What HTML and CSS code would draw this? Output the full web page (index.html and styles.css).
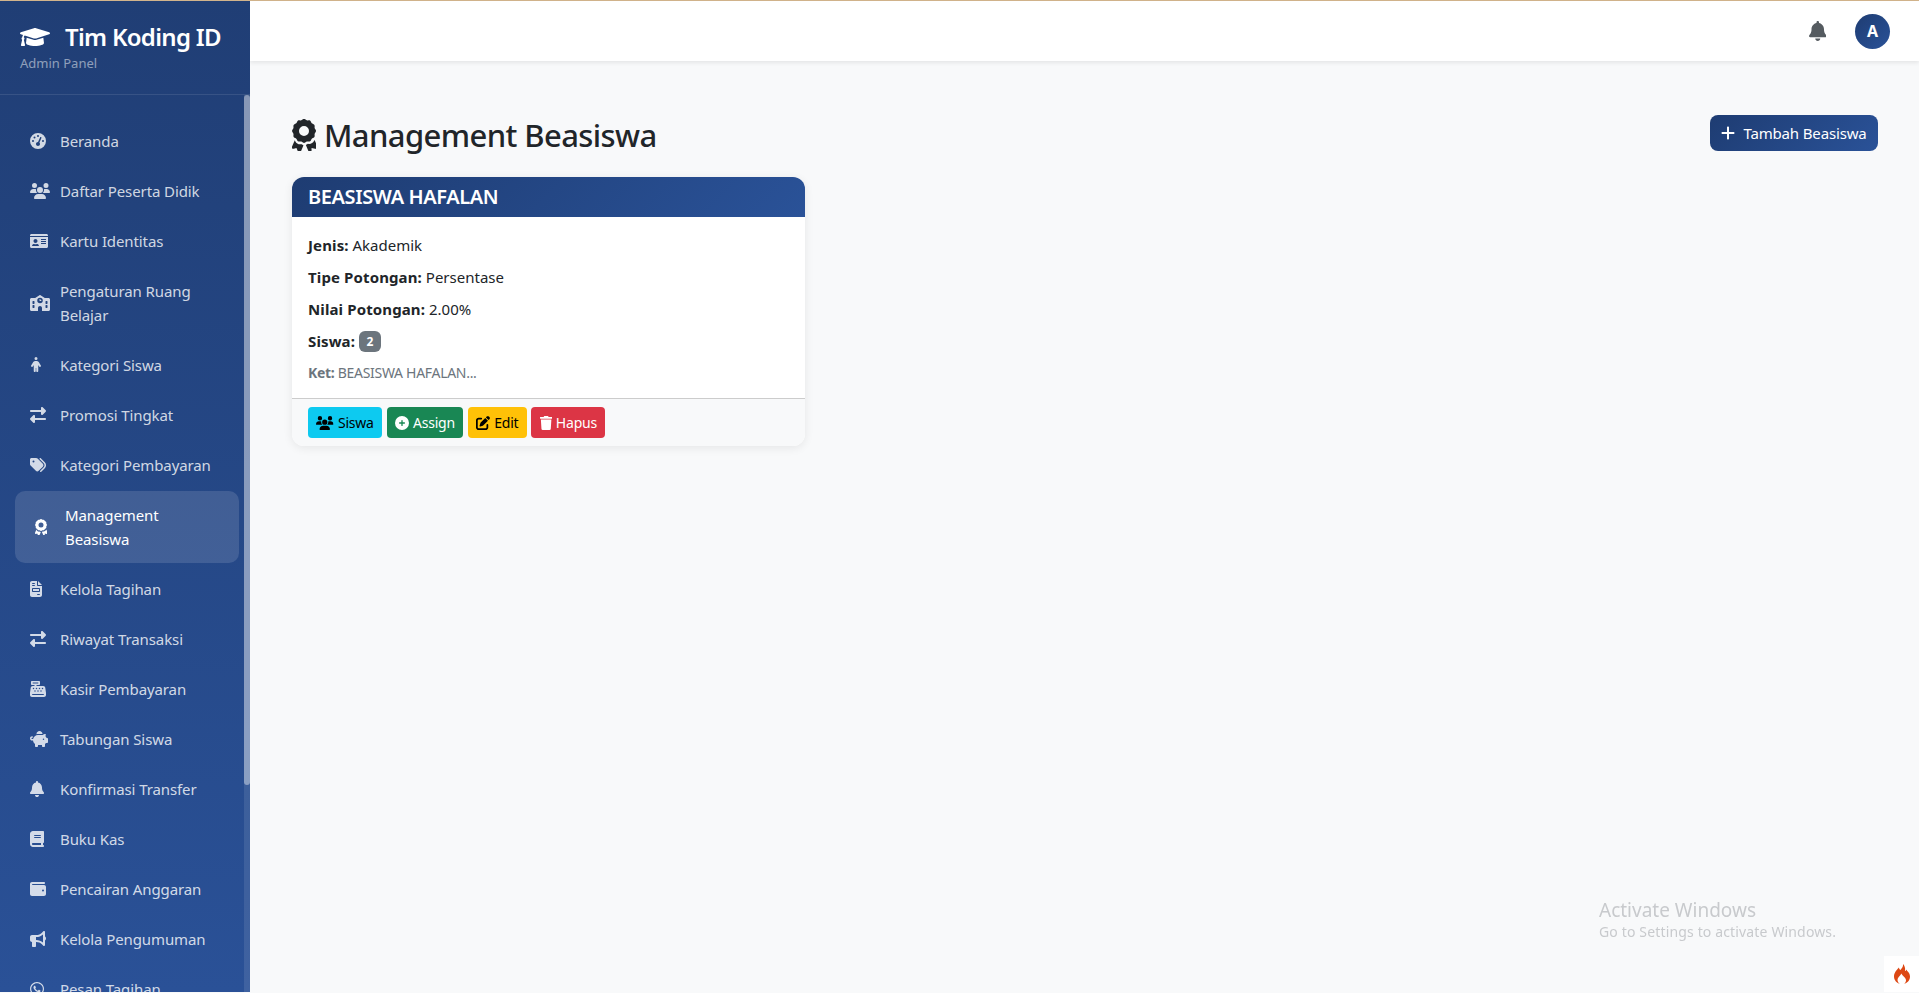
FILE: index.html
```html
<!DOCTYPE html>
<html lang="id">
<head>
<meta charset="utf-8">
<title>Management Beasiswa</title>
<link rel="stylesheet" href="styles.css">
</head>
<body>
<svg class="defs" aria-hidden="true">
  <symbol id="i-exchange" viewBox="0 0 512 512"><path d="M32 96l320 0V32c0-12.900 7.800-24.600 19.800-29.600s25.700-2.200 34.900 6.900l96 96c6 6 9.400 14.100 9.400 22.600s-3.400 16.600-9.400 22.600l-96 96c-9.200 9.200-22.900 11.900-34.900 6.900s-19.800-16.600-19.800-29.600V160L32 160c-17.700 0-32-14.300-32-32s14.300-32 32-32zM480 352c17.700 0 32 14.300 32 32s-14.300 32-32 32H160v64c0 12.900-7.800 24.600-19.800 29.600s-25.700 2.200-34.900-6.900l-96-96c-6-6-9.400-14.100-9.400-22.600s3.400-16.600 9.400-22.600l96-96c9.200-9.200 22.900-11.900 34.900-6.900s19.800 16.700 19.800 29.600l0 64H480z"/></symbol>
  <symbol id="i-users" viewBox="0 0 640 512"><path d="M144 0a80 80 0 1 1 0 160A80 80 0 1 1 144 0zM512 0a80 80 0 1 1 0 160A80 80 0 1 1 512 0zM0 298.700C0 239.800 47.800 192 106.700 192h42.700c15.900 0 31 3.500 44.600 9.700c-1.300 7.200-1.900 14.700-1.900 22.300c0 38.200 16.800 72.500 43.300 96c-.2 0-.4 0-.7 0H21.300C9.600 320 0 310.400 0 298.700zM405.300 320c-.2 0-.4 0-.7 0c26.600-23.500 43.300-57.800 43.300-96c0-7.600-.7-15-1.900-22.300c13.600-6.300 28.700-9.700 44.600-9.700h42.700C592.200 192 640 239.800 640 298.700c0 11.800-9.600 21.300-21.300 21.300H405.300zM224 224a96 96 0 1 1 192 0 96 96 0 1 1 -192 0zM128 485.300C128 411.700 187.700 352 261.300 352H378.700C452.300 352 512 411.700 512 485.300c0 14.700-11.900 26.700-26.700 26.700H154.700c-14.700 0-26.700-11.900-26.700-26.700z"/></symbol>
  <symbol id="i-award" viewBox="0 0 384 512"><path d="M173.800 5.500c11.100-7.300 25.400-7.300 36.500 0L228 17.200c6 3.900 13 5.800 20.100 5.400l21.100-1.300c13.200-.8 25.600 6.400 31.500 18.200l9.500 18.900c3.200 6.400 8.400 11.500 14.700 14.700L344.500 82.500c11.800 5.900 19 18.300 18.200 31.500l-1.300 21.100c-.4 7.100 1.500 14.200 5.400 20.100l11.700 17.700c7.300 11.100 7.300 25.400 0 36.500L366.800 227.500c-3.900 6-5.800 13-5.400 20.100l1.300 21.100c.8 13.200-6.400 25.600-18.200 31.500l-18.900 9.500c-6.400 3.200-11.500 8.400-14.700 14.700L301.400 343.300c-5.900 11.800-18.300 19-31.500 18.200l-21.100-1.300c-7.100-.4-14.200 1.500-20.100 5.400l-17.700 11.700c-11.100 7.300-25.400 7.300-36.500 0L157 365.600c-6-3.900-13-5.800-20.100-5.400l-21.100 1.300c-13.200 .8-25.600-6.400-31.500-18.200l-9.500-18.900c-3.200-6.400-8.400-11.500-14.700-14.700L40.800 300.200c-11.800-5.900-19-18.300-18.200-31.500l1.300-21.100c.4-7.100-1.500-14.200-5.400-20.100L6.800 209.800c-7.300-11.100-7.300-25.400 0-36.500L18.500 155.600c3.900-6 5.800-13 5.400-20.100L22.600 114.400c-.8-13.200 6.400-25.600 18.200-31.500l18.900-9.500c6.400-3.200 11.500-8.400 14.700-14.700L83.900 39.800c5.900-11.800 18.300-19 31.500-18.200l21.100 1.300c7.100 .4 14.200-1.500 20.100-5.400L173.800 5.500zM272 192a80 80 0 1 0 -160 0 80 80 0 1 0 160 0zM1.300 441.800L44.400 339.300c.2 .1 .3 .2 .4 .4l9.500 18.900c14.900 29.800 46.100 47.900 79.300 45.800l21.100-1.300c.2 0 .5 0 .7 .2l17.700 11.700c3.500 2.300 7.100 4.300 10.900 6l-38.700 92c-4.300 10.300-14.100 17.100-25.200 17.700s-21.600-5.200-26.900-15L71 465.500l-42.100 10.800c-11 2.800-22.500-1-29.700-9.800s-8.900-20.800-4.500-31.200zM312.600 510.500c-5.300 9.800-15.800 15.700-26.900 15s-20.900-7.500-25.200-17.700l-38.700-92c3.800-1.700 7.400-3.700 10.900-6l17.700-11.700c.2-.1 .4-.2 .7-.2l21.100 1.300c33.200 2 64.400-16 79.300-45.800l9.500-18.900c.1-.2 .2-.3 .4-.4l43.100 102.500c4.400 10.400 2.600 22.400-4.500 31.200s-18.700 12.600-29.700 9.800L313 465.500l-.4 45z"/></symbol>
  <symbol id="i-bell" viewBox="0 0 448 512"><path d="M224 0c-17.700 0-32 14.300-32 32V51.200C119 66 64 130.600 64 208v18.800c0 47-17.300 92.400-48.500 127.600l-7.400 8.300c-8.400 9.400-10.400 22.900-5.300 34.400S19.400 416 32 416H416c12.600 0 24-7.400 29.200-18.900s3.100-25-5.300-34.400l-7.400-8.300C401.300 319.200 384 273.900 384 226.800V208c0-77.400-55-142-128-156.800V32c0-17.700-14.300-32-32-32zm45.300 493.300c12-12 18.700-28.300 18.700-45.300H224 160c0 17 6.700 33.300 18.700 45.300s28.300 18.700 45.300 18.700s33.300-6.700 45.300-18.700z"/></symbol>
</svg>

<div class="layout">
  <aside class="sidebar">
    <div class="brand">
      <div class="brand-title">
        <svg class="brand-icon" viewBox="0 0 640 512"><path d="M622.34 153.2L343.4 67.5c-15.2-4.67-31.6-4.67-46.79 0L17.66 153.2c-23.54 7.23-23.54 38.36 0 45.59l48.63 14.94c-10.67 13.19-17.23 29.28-17.88 46.9C38.78 266.15 32 276.11 32 288c0 10.78 5.68 19.85 13.86 25.65L20.33 428.53C18.11 438.52 25.71 448 35.94 448h56.11c10.24 0 17.84-9.48 15.62-19.47L82.14 313.65C90.32 307.85 96 298.78 96 288c0-11.57-6.47-21.25-15.66-26.87.76-15.02 8.44-28.3 20.69-36.72L296.6 285.5c9.06 2.78 26.44 6.25 46.79 0l278.95-85.7c23.55-7.24 23.55-38.36 0-45.6zM352.79 315.09c-28.53 8.76-52.84 3.92-65.59 0l-145.02-44.55L128 384c0 35.35 85.96 64 192 64s192-28.65 192-64l-14.18-113.47-145.03 44.56z"/></svg>
        <span>Tim Koding ID</span>
      </div>
      <div class="brand-sub">Admin Panel</div>
    </div>
    <nav class="nav">
      <a class="nav-item"><span class="nav-ico"><svg class="ico" viewBox="0 0 512 512"><path d="M0 256a256 256 0 1 1 512 0A256 256 0 1 1 0 256zM288 96a32 32 0 1 0 -64 0 32 32 0 1 0 64 0zM256 416c35.3 0 64-28.7 64-64c0-17.4-6.9-33.1-18.1-44.6L366 161.7c5.3-12.1-.2-26.3-12.3-31.6s-26.3 .2-31.6 12.3L257.9 288c-.6 0-1.3 0-1.9 0c-35.3 0-64 28.7-64 64s28.7 64 64 64zM176 144a32 32 0 1 0 -64 0 32 32 0 1 0 64 0zM96 288a32 32 0 1 0 0-64 32 32 0 1 0 0 64zm352-32a32 32 0 1 0 -64 0 32 32 0 1 0 64 0z"/></svg></span><span>Beranda</span></a>
      <a class="nav-item"><span class="nav-ico"><svg class="ico w125"><use href="#i-users"/></svg></span><span>Daftar Peserta Didik</span></a>
      <a class="nav-item"><span class="nav-ico"><svg class="ico w1125" viewBox="0 0 576 512"><path d="M528 32H48C21.5 32 0 53.5 0 80v16h576V80c0-26.5-21.5-48-48-48zM0 432c0 26.5 21.5 48 48 48h480c26.5 0 48-21.5 48-48V128H0v304zm352-232c0-4.4 3.6-8 8-8h144c4.4 0 8 3.6 8 8v16c0 4.4-3.6 8-8 8H360c-4.4 0-8-3.6-8-8v-16zm0 64c0-4.4 3.6-8 8-8h144c4.4 0 8 3.6 8 8v16c0 4.4-3.6 8-8 8H360c-4.4 0-8-3.6-8-8v-16zm0 64c0-4.4 3.6-8 8-8h144c4.4 0 8 3.6 8 8v16c0 4.4-3.6 8-8 8H360c-4.4 0-8-3.6-8-8v-16zM176 192c35.3 0 64 28.7 64 64s-28.7 64-64 64-64-28.7-64-64 28.7-64 64-64zM67.1 396.2C75.5 370.5 99.6 352 128 352h8.2c12.3 5.1 25.7 8 39.8 8s27.6-2.9 39.8-8h8.2c28.4 0 52.5 18.5 60.9 44.2 3.2 9.9-5.2 19.8-15.6 19.8H82.7c-10.4 0-18.8-10-15.6-19.8z"/></svg></span><span>Kartu Identitas</span></a>
      <a class="nav-item"><span class="nav-ico"><svg class="ico w125" viewBox="0 0 640 512"><path d="M337.8 5.4C327-1.8 313-1.8 302.2 5.4L166.3 96H48C21.5 96 0 117.5 0 144V464c0 26.5 21.5 48 48 48H256V416c0-35.3 28.7-64 64-64s64 28.7 64 64v96H592c26.5 0 48-21.5 48-48V144c0-26.5-21.5-48-48-48H473.7L337.8 5.4zM96 192h32c8.8 0 16 7.2 16 16v64c0 8.8-7.2 16-16 16H96c-8.8 0-16-7.2-16-16V208c0-8.8 7.2-16 16-16zm400 16c0-8.8 7.2-16 16-16h32c8.8 0 16 7.2 16 16v64c0 8.8-7.2 16-16 16H512c-8.8 0-16-7.2-16-16V208zM96 320h32c8.8 0 16 7.2 16 16v64c0 8.8-7.2 16-16 16H96c-8.8 0-16-7.2-16-16V336c0-8.8 7.2-16 16-16zm400 16c0-8.8 7.2-16 16-16h32c8.8 0 16 7.2 16 16v64c0 8.8-7.2 16-16 16H512c-8.8 0-16-7.2-16-16V336zM232 176a88 88 0 1 1 176 0 88 88 0 1 1 -176 0zm88-48c-8.8 0-16 7.2-16 16v32c0 8.8 7.2 16 16 16h32c8.8 0 16-7.2 16-16s-7.2-16-16-16H336V144c0-8.8-7.2-16-16-16z"/></svg></span><span>Pengaturan Ruang Belajar</span></a>
      <a class="nav-item"><span class="nav-ico"><svg class="ico w075" viewBox="0 0 384 512"><path d="M192 96a48 48 0 1 0 0-96 48 48 0 1 0 0 96zm-8 352V352h16v96c0 17.7 14.3 32 32 32s32-14.3 32-32V256.9l28.6 47.5c9.1 15.1 28.8 20 43.9 10.9s20-28.8 10.9-43.9l-58.3-97c-17.4-28.9-48.6-46.6-82.3-46.6H177.1c-33.7 0-64.9 17.7-82.3 46.6l-58.3 97c-9.1 15.1-4.2 34.8 10.9 43.9s34.8 4.2 43.9-10.9L120 256.9V448c0 17.7 14.3 32 32 32s32-14.3 32-32z"/></svg></span><span>Kategori Siswa</span></a>
      <a class="nav-item"><span class="nav-ico"><svg class="ico"><use href="#i-exchange"/></svg></span><span>Promosi Tingkat</span></a>
      <a class="nav-item"><span class="nav-ico"><svg class="ico" viewBox="0 0 512 512"><path d="M345 39.100L472.800 168.400c52.400 53 52.400 138.200 0 191.200L360.800 472.900c-9.300 9.400-24.500 9.500-33.900 .2s-9.500-24.500-.2-33.900L438.600 325.900c33.900-34.300 33.900-89.400 0-123.700L310.900 72.900c-9.300-9.400-9.200-24.600 .2-33.900s24.600-9.200 33.900 .2zM0 229.500V80C0 53.500 21.500 32 48 32H197.500c17 0 33.300 6.700 45.300 18.700l168 168c25 25 25 65.500 0 90.500L277.300 442.700c-25 25-65.500 25-90.500 0l-168-168C6.700 262.700 0 246.500 0 229.500zM144 144a32 32 0 1 0 -64 0 32 32 0 1 0 64 0z"/></svg></span><span>Kategori Pembayaran</span></a>
      <a class="nav-item active"><span class="nav-ico"><svg class="ico w075"><use href="#i-award"/></svg></span><span>Management Beasiswa</span></a>
      <a class="nav-item"><span class="nav-ico"><svg class="ico w075" viewBox="0 0 384 512"><path d="M64 0C28.700 0 0 28.700 0 64V448c0 35.300 28.700 64 64 64H320c35.300 0 64-28.700 64-64V160H256c-17.700 0-32-14.300-32-32V0H64zM256 0V128H384L256 0zM80 64h64c8.800 0 16 7.200 16 16s-7.200 16-16 16H80c-8.800 0-16-7.200-16-16s7.200-16 16-16zm0 64h64c8.800 0 16 7.200 16 16s-7.200 16-16 16H80c-8.800 0-16-7.200-16-16s7.200-16 16-16zm16 96H288c17.700 0 32 14.300 32 32v64c0 17.700-14.300 32-32 32H96c-17.700 0-32-14.300-32-32V256c0-17.700 14.300-32 32-32zm0 32v64H288V256H96zM240 416h64c8.800 0 16 7.200 16 16s-7.200 16-16 16H240c-8.800 0-16-7.200-16-16s7.200-16 16-16z"/></svg></span><span>Kelola Tagihan</span></a>
      <a class="nav-item"><span class="nav-ico"><svg class="ico"><use href="#i-exchange"/></svg></span><span>Riwayat Transaksi</span></a>
      <a class="nav-item"><span class="nav-ico"><svg class="ico" viewBox="0 0 512 512"><path d="M64 0C46.300 0 32 14.300 32 32V96c0 17.700 14.300 32 32 32h80v32H87c-31.600 0-58.500 23.100-63.300 54.400L1.100 364.100C.4 368.800 0 373.600 0 378.400V448c0 35.300 28.700 64 64 64H448c35.300 0 64-28.700 64-64V378.400c0-4.800-.4-9.600-1.100-14.400L488.200 214.400C483.500 183.100 456.600 160 425 160H208V128h80c17.700 0 32-14.300 32-32V32c0-17.700-14.300-32-32-32H64zM96 48H256c8.800 0 16 7.200 16 16s-7.200 16-16 16H96c-8.800 0-16-7.200-16-16s7.200-16 16-16zM64 432c0-8.800 7.200-16 16-16H432c8.800 0 16 7.200 16 16s-7.200 16-16 16H80c-8.800 0-16-7.200-16-16zm48-168a24 24 0 1 1 0-48 24 24 0 1 1 0 48zm120-24a24 24 0 1 1 -48 0 24 24 0 1 1 48 0zM160 344a24 24 0 1 1 0-48 24 24 0 1 1 0 48zM328 240a24 24 0 1 1 -48 0 24 24 0 1 1 48 0zM256 344a24 24 0 1 1 0-48 24 24 0 1 1 0 48zM424 240a24 24 0 1 1 -48 0 24 24 0 1 1 48 0zM352 344a24 24 0 1 1 0-48 24 24 0 1 1 0 48z"/></svg></span><span>Kasir Pembayaran</span></a>
      <a class="nav-item"><span class="nav-ico"><svg class="ico w1125" viewBox="0 0 576 512"><path d="M400 96l0 .7c-5.300-.4-10.600-.7-16-.7H256c-16.500 0-32.500 2.100-47.800 6c-.1-2-.2-4-.2-6c0-53 43-96 96-96s96 43 96 96zm-16 32c3.500 0 7 .1 10.400 .3c4.200 .3 8.400 .7 12.600 1.300C424.600 109.100 450.800 96 480 96h11.500c10.400 0 18 9.800 15.500 19.900l-13.800 55.200c15.800 14.800 28.700 32.800 37.500 52.900H544c17.700 0 32 14.300 32 32v96c0 17.700-14.300 32-32 32H512c-9.100 12.100-19.900 22.900-32 32v64c0 17.700-14.300 32-32 32H416c-17.700 0-32-14.300-32-32V448H256v32c0 17.700-14.300 32-32 32H192c-17.700 0-32-14.300-32-32V416c-34.900-26.200-58.700-66.300-63.200-112H68c-37.600 0-68-30.400-68-68s30.400-68 68-68h4c13.300 0 24 10.700 24 24s-10.700 24-24 24H68c-11 0-20 9-20 20s9 20 20 20H99.200c14.800-73 79.400-128 156.800-128H384zm48 160a24 24 0 1 0 0-48 24 24 0 1 0 0 48z"/></svg></span><span>Tabungan Siswa</span></a>
      <a class="nav-item"><span class="nav-ico"><svg class="ico w0875"><use href="#i-bell"/></svg></span><span>Konfirmasi Transfer</span></a>
      <a class="nav-item"><span class="nav-ico"><svg class="ico w0875" viewBox="0 0 448 512"><path d="M96 0C43 0 0 43 0 96V416c0 53 43 96 96 96H384h32c17.700 0 32-14.300 32-32s-14.300-32-32-32V384c17.700 0 32-14.300 32-32V32c0-17.700-14.300-32-32-32H384 96zm0 384H352v64H96c-17.700 0-32-14.300-32-32s14.300-32 32-32zm32-240c0-8.800 7.200-16 16-16H336c8.800 0 16 7.200 16 16s-7.200 16-16 16H144c-8.800 0-16-7.200-16-16zm16 48H336c8.800 0 16 7.200 16 16s-7.200 16-16 16H144c-8.800 0-16-7.200-16-16s7.200-16 16-16z"/></svg></span><span>Buku Kas</span></a>
      <a class="nav-item"><span class="nav-ico"><svg class="ico" viewBox="0 0 512 512"><path d="M64 32C28.700 32 0 60.700 0 96V416c0 35.300 28.700 64 64 64H448c35.300 0 64-28.700 64-64V192c0-35.300-28.700-64-64-64H80c-8.800 0-16-7.200-16-16s7.200-16 16-16H448c17.700 0 32-14.300 32-32s-14.300-32-32-32H64zM416 272a32 32 0 1 1 0 64 32 32 0 1 1 0-64z"/></svg></span><span>Pencairan Anggaran</span></a>
      <a class="nav-item"><span class="nav-ico"><svg class="ico" viewBox="0 0 512 512"><path d="M480 32c0-12.900-7.800-24.600-19.800-29.600s-25.700-2.200-34.900 6.900L381.700 53c-48 48-113.100 75-181 75H192 160 64c-35.300 0-64 28.700-64 64v96c0 35.300 28.700 64 64 64l0 128c0 17.700 14.300 32 32 32h64c17.700 0 32-14.300 32-32V352l8.700 0c67.900 0 133 27 181 75l43.600 43.600c9.200 9.200 22.900 11.900 34.900 6.900s19.800-16.600 19.800-29.600V300.400c18.600-8.800 32-32.500 32-60.400s-13.400-51.600-32-60.400V32zm-64 76.700V240 371.300C357.200 317.800 280.500 288 200.700 288H192V192h8.700c79.800 0 156.500-29.800 215.300-83.300z"/></svg></span><span>Kelola Pengumuman</span></a>
      <a class="nav-item"><span class="nav-ico"><svg class="ico w0875" viewBox="0 0 448 512"><path d="M380.900 97.100C339 55.100 283.200 32 223.900 32c-122.400 0-222 99.600-222 222 0 39.100 10.200 77.300 29.600 111L0 480l117.700-30.900c32.400 17.700 68.900 27 106.100 27h.1c122.300 0 224.100-99.600 224.100-222 0-59.300-25.200-115-67.100-157zm-157 341.600c-33.200 0-65.700-8.900-94-25.700l-6.700-4-69.800 18.300L72 359.200l-4.400-7c-18.500-29.400-28.200-63.300-28.200-98.200 0-101.700 82.800-184.500 184.600-184.500 49.300 0 95.600 19.200 130.400 54.100 34.800 34.900 56.200 81.200 56.100 130.500 0 101.800-84.900 184.600-186.600 184.600zm101.200-138.200c-5.500-2.800-32.800-16.200-37.900-18-5.100-1.900-8.800-2.800-12.500 2.800-3.700 5.600-14.300 18-17.600 21.800-3.200 3.700-6.500 4.200-12 1.400-32.600-16.300-54-29.100-75.500-66-5.700-9.800 5.700-9.100 16.300-30.300 1.800-3.700 .9-6.900-.5-9.700-1.400-2.800-12.500-30.100-17.100-41.200-4.500-10.800-9.100-9.300-12.500-9.500-3.200-.2-6.900-.2-10.600-.2-3.700 0-9.700 1.400-14.800 6.900-5.100 5.600-19.400 19-19.400 46.300 0 27.300 19.900 53.700 22.600 57.400 2.800 3.700 39.100 59.700 94.800 83.800 35.200 15.200 49 16.500 66.600 13.900 10.700-1.600 32.800-13.400 37.400-26.400 4.600-13 4.600-24.100 3.200-26.400-1.300-2.500-5-3.900-10.500-6.600z"/></svg></span><span>Pesan Tagihan</span></a>
    </nav>
    <div class="scroll-track"><div class="scroll-thumb"></div></div>
  </aside>

  <div class="main">
    <header class="topbar">
      <svg class="top-bell"><use href="#i-bell"/></svg>
      <div class="avatar">A</div>
    </header>
    <main class="content">
      <div class="page-head">
        <h1 class="page-title"><svg class="title-ico"><use href="#i-award"/></svg><span>Management Beasiswa</span></h1>
        <button class="btn-add"><svg class="add-ico" viewBox="0 0 448 512"><path d="M256 80c0-17.700-14.300-32-32-32s-32 14.300-32 32V224H48c-17.700 0-32 14.300-32 32s14.300 32 32 32H192V432c0 17.700 14.300 32 32 32s32-14.300 32-32V288H400c17.700 0 32-14.300 32-32s-14.300-32-32-32H256V80z"/></svg><span>Tambah Beasiswa</span></button>
      </div>
      <article class="card">
        <div class="card-head">BEASISWA HAFALAN</div>
        <div class="card-body">
          <p class="row"><b>Jenis:</b> Akademik</p>
          <p class="row"><b>Tipe Potongan:</b> Persentase</p>
          <p class="row"><b>Nilai Potongan:</b> 2.00%</p>
          <p class="row"><b>Siswa:</b> <span class="badge">2</span></p>
          <p class="note"><b>Ket:</b> BEASISWA HAFALAN...</p>
        </div>
        <div class="card-foot">
          <button class="btn btn-info"><svg class="btn-ico w125"><use href="#i-users"/></svg>Siswa</button>
          <button class="btn btn-success"><svg class="btn-ico" viewBox="0 0 512 512"><path d="M256 512A256 256 0 1 0 256 0a256 256 0 1 0 0 512zM232 344V280H168c-13.300 0-24-10.700-24-24s10.700-24 24-24h64V168c0-13.300 10.700-24 24-24s24 10.700 24 24v64h64c13.300 0 24 10.700 24 24s-10.700 24-24 24H280v64c0 13.300-10.700 24-24 24s-24-10.700-24-24z"/></svg>Assign</button>
          <button class="btn btn-warning"><svg class="btn-ico" viewBox="0 0 512 512"><path d="M471.600 21.700c-21.900-21.900-57.300-21.900-79.200 0L362.300 51.700l97.900 97.900 30.100-30.100c21.900-21.900 21.900-57.300 0-79.200L471.600 21.700zm-299.200 220c-6.100 6.100-10.800 13.600-13.500 21.900l-29.600 88.800c-2.900 8.600-.6 18.100 5.800 24.600s15.900 8.700 24.600 5.800l88.800-29.600c8.200-2.700 15.700-7.400 21.900-13.500L437.700 172.300 339.700 74.300 172.400 241.700zM96 64C43 64 0 107 0 160V416c0 53 43 96 96 96H352c53 0 96-43 96-96V320c0-17.700-14.300-32-32-32s-32 14.300-32 32v96c0 17.700-14.300 32-32 32H96c-17.700 0-32-14.300-32-32V160c0-17.700 14.300-32 32-32h96c17.700 0 32-14.300 32-32s-14.300-32-32-32H96z"/></svg>Edit</button>
          <button class="btn btn-danger"><svg class="btn-ico w0875" viewBox="0 0 448 512"><path d="M432 32H312l-9.400-18.700A24 24 0 0 0 281.100 0H166.800a23.720 23.720 0 0 0-21.400 13.300L136 32H16A16 16 0 0 0 0 48v32a16 16 0 0 0 16 16h416a16 16 0 0 0 16-16V48a16 16 0 0 0-16-16zM53.200 467a48 48 0 0 0 47.900 45h245.800a48 48 0 0 0 47.900-45L416 128H32z"/></svg>Hapus</button>
        </div>
      </article>
    </main>
  </div>
</div>

<div class="watermark">
  <div class="wm-title">Activate Windows</div>
  <div class="wm-sub">Go to Settings to activate Windows.</div>
</div>
<div class="ci-badge">
  <svg class="ci-flame" viewBox="0 0 16 20"><path d="M9 0C9.500 3 7.500 4.500 6.500 6 5.500 5.500 5 4.500 5 3.500 3 5.500 0 8.500 0 12.500 0 16.500 3 19 6 20 4.500 19 3.500 17.500 3.500 16 3.500 13.500 6 12 7.500 9.500 8 11.500 11.500 13 12 16 12.200 17.500 11.200 19 10 20 13 19.200 16 16.500 16 12.500 16 8.500 13 7.500 12.500 5.500 12 6.500 11.500 7 11 7 11.500 4 10.500 1.500 9 0z"/></svg>
</div>
```

FILE: styles.css
```css
* { box-sizing: border-box; }
html, body { margin: 0; height: 100%; overflow: hidden; }
body {
  font-family: "Noto Sans", "Open Sans", sans-serif;
  font-size: 16px;
  line-height: 24px;
  color: #212529;
  background: #f8f9fa;
}
.defs { display: none; }
.layout { display: flex; height: calc(100vh - 1px); border-top: 1px solid #d2b48c; }

.sidebar {
  position: relative;
  width: 250px;
  flex: none;
  display: flex;
  flex-direction: column;
  color: #fff;
  background: linear-gradient(180deg, #203e75, #2a5197);
}
.brand {
  height: 94px;
  padding: 21px 20px 0;
  border-bottom: 1px solid rgba(255,255,255,.1);
  flex: none;
}
.brand-title { display: flex; align-items: center; gap: 15px; font-size: 24px; font-weight: 600; line-height: 30px; letter-spacing: -0.7px; }
.brand-icon { width: 30px; height: 24px; fill: #fff; flex: none; }
.brand-sub { font-size: 13px; line-height: 20px; margin-top: 1px; color: rgba(255,255,255,.5); letter-spacing: 0; }

.nav {
  flex: 1;
  min-height: 0;
  overflow: hidden;
  padding: 22px 11px 0 15px;
}
.scroll-track {
  position: absolute;
  top: 94px;
  right: 0;
  bottom: 0;
  width: 6px;
  background: rgba(255,255,255,.1);
}
.scroll-thumb { height: 690px; border-radius: 3px; background: rgba(255,255,255,.4); }
.nav-item {
  display: flex;
  align-items: center;
  padding: 12px 15px;
  margin-bottom: 2px;
  border-radius: 10px;
  font-size: 15px;
  line-height: 24px;
  letter-spacing: -0.1px;
  color: rgba(255,255,255,.8);
}
.nav-item.active { background: rgba(255,255,255,.13); color: #fff; padding-left: 20px; padding-right: 30px; }
.nav-ico { width: 20px; margin-right: 10px; flex: none; display: flex; align-items: center; }
.ico { width: 16px; height: 16px; fill: currentColor; display: block; }
.w125 { width: 20px; }
.w1125 { width: 18px; }
.w0875 { width: 14px; }
.w075 { width: 12px; }

.main { flex: 1; min-width: 0; display: flex; flex-direction: column; }
.topbar {
  height: 60px;
  flex: none;
  background: #fff;
  box-shadow: 0 2px 4px rgba(0,0,0,.08);
  display: flex;
  align-items: center;
  justify-content: flex-end;
  padding-right: 29px;
  gap: 29px;
}
.top-bell { width: 17.500px; height: 20px; fill: #555b60; }
.avatar {
  width: 35px;
  height: 35px;
  border-radius: 50%;
  background: linear-gradient(135deg, #1e3c72, #2a5298);
  color: #fff;
  font-size: 16px;
  font-weight: 700;
  display: flex;
  align-items: center;
  justify-content: center;
}

.content { padding: 54px 41px 0 42px; }
.page-head { display: flex; justify-content: space-between; align-items: center; height: 36px; margin-bottom: 26px; }
.page-title { margin: 4px 0 0; display: flex; align-items: center; gap: 8px; font-size: 31px; font-weight: 500; line-height: 38px; letter-spacing: -0.6px; }
.title-ico { width: 24px; height: 32px; fill: #212529; flex: none; }
.btn-add {
  width: 168px;
  height: 36px;
  border: 0;
  border-radius: 8px;
  background: linear-gradient(135deg, #1e3c72, #2a5298);
  color: #fff;
  display: flex;
  align-items: center;
  justify-content: center;
  gap: 8px;
  font: inherit;
  font-size: 15px;
  letter-spacing: -0.15px;
}
.add-ico { width: 14px; height: 16px; fill: #fff; }

.card {
  width: 513px;
  height: 269px;
  background: #fff;
  border-radius: 12px;
  box-shadow: 0 2px 10px rgba(0,0,0,.08);
  overflow: hidden;
}
.card-head {
  height: 40px;
  padding: 0 16px;
  display: flex;
  align-items: center;
  background: linear-gradient(135deg, #1e3c72, #2a5298);
  color: #fff;
  font-size: 20px;
  font-weight: 600;
  letter-spacing: -0.4px;
}
.card-body { padding: 16px 16px 0; height: 182px; border-bottom: 1px solid #ccc; }
.row { margin: 0 0 8px; font-size: 15px; }
.row b { font-weight: 700; letter-spacing: 0.12px; }
.badge {
  display: inline-block;
  width: 22px;
  height: 21px;
  border-radius: 6px;
  background: #6c757d;
  color: #fff;
  font-size: 12px;
  font-weight: 700;
  line-height: 21px;
  text-align: center;
  vertical-align: 1px;
}
.note { margin: 0; font-size: 14px; letter-spacing: -0.3px; color: #6c757d; }
.card-foot { height: 47px; background: #f8f9fa; padding: 8px 16px; display: flex; gap: 4.400px; }
.btn {
  height: 31px;
  border: 0;
  border-radius: 4px;
  padding: 0 8.400px;
  display: flex;
  align-items: center;
  gap: 4px;
  font: inherit;
  font-size: 14px;
  letter-spacing: -0.2px;
}
.btn-ico { width: 14px; height: 14px; fill: currentColor; flex: none; }
.btn-ico.w125 { width: 17.500px; }
.btn-ico.w0875 { width: 12.250px; }
.btn-info { background: #0dcaf0; color: #000; }
.btn-success { background: #198754; color: #fff; }
.btn-warning { background: #ffc107; color: #000; }
.btn-danger { background: #dc3545; color: #fff; }

.watermark { position: fixed; left: 1599px; top: 897px; color: #c8cacd; }
.wm-title { font-size: 19px; line-height: 26px; }
.wm-sub { font-size: 14px; line-height: 18px; letter-spacing: 0.15px; }
.ci-badge {
  position: fixed;
  right: 0;
  bottom: 1px;
  width: 35px;
  height: 36px;
  background: #fff;
  display: flex;
  align-items: center;
  justify-content: center;
}
.ci-flame { width: 16px; height: 20px; fill: #dd4814; }
```
